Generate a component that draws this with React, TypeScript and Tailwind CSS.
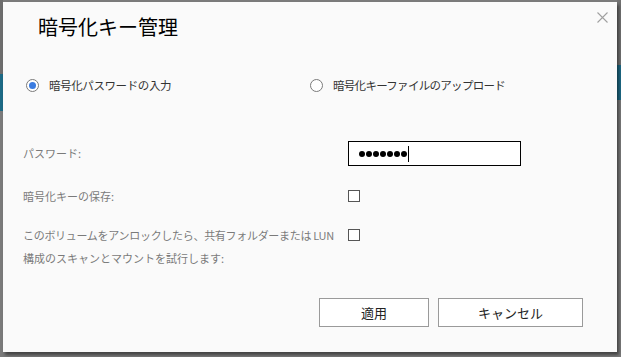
import React from 'react';

const font = { fontFamily: '"Noto Sans CJK JP", "Noto Sans", sans-serif' };

const Radio: React.FC<{ checked?: boolean; label: string; tight?: boolean }> = ({ checked, label, tight }) => (
  <label className="flex items-center gap-[10px] h-[16px]">
    <span className="w-[13px] h-[13px] rounded-full border border-[#7a7a7a] bg-white flex items-center justify-center">
      {checked && <span className="w-[7px] h-[7px] rounded-full bg-[#3a7be0]" />}
    </span>
    <span
      className={`text-[11.5px] leading-[16px] text-[#333] whitespace-nowrap ${tight ? 'tracking-[-0.7px]' : 'tracking-[-0.4px]'}`}
    >
      {label}
    </span>
  </label>
);

const Checkbox: React.FC = () => <span className="block w-[12px] h-[12px] border border-[#555] bg-white" />;

export default function App() {
  return (
    <div className="w-[621px] h-[357px] bg-[#7b7b7b] flex overflow-hidden" style={font}>
      {/* left strip of the page behind */}
      <div className="w-[3px] flex flex-col">
        <div className="h-[74px] bg-[#6d6d6d]" />
        <div className="h-[37px] bg-[#1d6a86]" />
      </div>

      <div className="mt-[2px] w-[614px] h-[350px] bg-[#fafafa] relative shadow-[2px_3px_3px_rgba(0,0,0,0.45)] flex flex-col">
        <button className="absolute right-[9px] top-[10px] w-[11px] h-[11px]" aria-label="close">
          <svg viewBox="0 0 11 11" className="w-[11px] h-[11px]">
            <path d="M0.5 0.5 L10.5 10.5 M10.5 0.5 L0.5 10.5" stroke="#a0a0a0" strokeWidth="1.1" fill="none" />
          </svg>
        </button>

        <h1 className="mt-[12px] pl-[35px] text-[20px] leading-[26px] text-black font-normal">暗号化キー管理</h1>

        <div className="mt-[37px] flex">
          <div className="pl-[23px] w-[304px]">
            <Radio checked label="暗号化パスワードの入力" />
          </div>
          <div className="pl-[3px]">
            <Radio tight label="暗号化キーファイルのアップロード" />
          </div>
        </div>

        <div className="mt-[48px] flex items-center h-[25px] text-[11px] text-[#7a7a7a]">
          <div className="pl-[20px] w-[345px]">パスワード:</div>
          <div className="w-[173px] h-[25px] border border-black bg-white flex items-center pl-[10px]">
            <div className="flex gap-[1px]">
              {Array.from({ length: 7 }).map((_, i) => (
                <span key={i} className="w-[6px] h-[6px] rounded-full bg-black" />
              ))}
            </div>
            <span className="ml-[1px] w-[1px] h-[16px] bg-black" />
          </div>
        </div>

        <div className="mt-[22px] flex items-center h-[16px] text-[11px] text-[#7a7a7a]">
          <div className="pl-[20px] w-[345px]">暗号化キーの保存:</div>
          <Checkbox />
        </div>

        <div className="mt-[20px] flex text-[11px] leading-[23px] text-[#7a7a7a]">
          <div className="pl-[20px] w-[345px] whitespace-nowrap">
            <div className="tracking-[-0.3px]">このボリュームをアンロックしたら、共有フォルダーまたは LUN</div>
            <div>構成のスキャンとマウントを試行します:</div>
          </div>
          <div className="pt-[5px]">
            <Checkbox />
          </div>
        </div>

        <div className="mt-[28px] flex justify-end gap-[9px] pr-[34px]">
          <button className="w-[110px] h-[29px] border border-[#9a9a9a] bg-white text-[13px] text-[#222]">適用</button>
          <button className="w-[145px] h-[29px] border border-[#9a9a9a] bg-white text-[13px] text-[#222]">キャンセル</button>
        </div>
      </div>

      {/* right strip of the page behind */}
      <div className="w-[4px] flex flex-col">
        <div className="h-[65px] bg-[#727272]" />
        <div className="h-[35px] bg-[#1d6a86]" />
      </div>
    </div>
  );
}
